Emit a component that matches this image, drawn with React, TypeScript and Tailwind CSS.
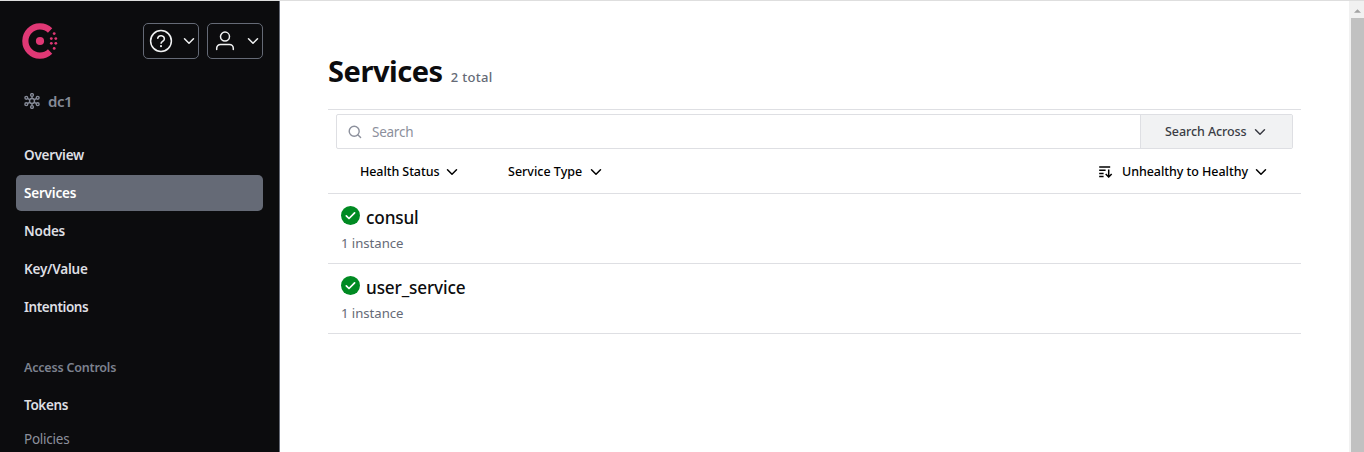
import type { ReactNode } from "react";

function Chevron({ className = "" }: { className?: string }) {
  return (
    <svg viewBox="0 0 12 12" className={"h-3 w-3 shrink-0 " + className} fill="none" stroke="currentColor" strokeWidth="1.5" strokeLinecap="round" strokeLinejoin="round">
      <path d="M1.5 3.8 6 8.3l4.5-4.5" />
    </svg>
  );
}

function ConsulLogo() {
  return (
    <svg viewBox="0 0 36 36" className="h-9 w-9" fill="#e03875">
      <path d="M28.1 28.5A14.6 14.6 0 1 1 28.1 7.5" fill="none" stroke="#e03875" strokeWidth="6.2" />
      <circle cx="18" cy="18" r="4.1" />
      <circle cx="32.2" cy="10.6" r="1.4" />
      <circle cx="29.3" cy="15.6" r="1.4" />
      <circle cx="33.8" cy="15.6" r="1.4" />
      <circle cx="29.3" cy="20.3" r="1.4" />
      <circle cx="33.8" cy="20.3" r="1.4" />
      <circle cx="32.2" cy="25.4" r="1.4" />
    </svg>
  );
}

function NetworkIcon() {
  return (
    <svg viewBox="0 0 16 16" className="h-4 w-4" fill="none" stroke="currentColor" strokeWidth="1.4">
      <circle cx="8" cy="8" r="2.5" />
      <circle cx="8" cy="2" r="1.4" />
      <circle cx="8" cy="14" r="1.4" />
      <circle cx="2.3" cy="4.8" r="1.4" />
      <circle cx="13.7" cy="4.8" r="1.4" />
      <circle cx="2.3" cy="11.2" r="1.4" />
      <circle cx="13.7" cy="11.2" r="1.4" />
      <path d="M8 3.3v2.4M8 10.3v2.4M3.4 5.4 6 6.8M12.6 5.4 10 6.8M3.4 10.6 6 9.2M12.6 10.6 10 9.2" />
    </svg>
  );
}

function HelpIcon() {
  return (
    <svg viewBox="0 0 24 24" className="h-6 w-6" fill="none" stroke="currentColor" strokeWidth="1.5" strokeLinecap="round" strokeLinejoin="round">
      <circle cx="12" cy="12" r="10.4" />
      <path d="M8.7 9.3a3.4 3.4 0 0 1 6.7.8c0 2.1-3.3 2.5-3.3 4.2" />
      <path d="M12 17.1v.1" strokeWidth="2" />
    </svg>
  );
}

function UserIcon() {
  return (
    <svg viewBox="0 0 24 24" className="h-6 w-6" fill="none" stroke="currentColor" strokeWidth="1.5" strokeLinecap="round">
      <circle cx="12" cy="7.6" r="4.5" />
      <path d="M3.7 20.6v-1.4c0-2.1 1.7-3.8 3.8-3.8h9c2.1 0 3.8 1.7 3.8 3.8v1.4" />
    </svg>
  );
}

function SearchIcon() {
  return (
    <svg viewBox="0 0 14 14" className="h-3.5 w-3.5" fill="none" stroke="currentColor" strokeWidth="1.4" strokeLinecap="round">
      <circle cx="6.2" cy="6.2" r="5" />
      <path d="m10 10 2.6 2.6" />
    </svg>
  );
}

function SortIcon() {
  return (
    <svg viewBox="0 0 14 12" className="h-3 w-3.5" fill="none" stroke="currentColor" strokeWidth="1.5">
      <path d="M.2 1h11M.2 4.2h6.4M.2 7.4h4.4M.2 10.6h4.4" />
      <path d="M9.7 3.4v7.4M6.7 8l3 3 3-3" />
    </svg>
  );
}

function CheckBadge() {
  return (
    <svg viewBox="0 0 19 19" className="h-[19px] w-[19px] shrink-0">
      <circle cx="9.5" cy="9.5" r="9.5" fill="#008a22" />
      <path d="m5.3 9.9 2.7 2.6 5.6-5.6" fill="none" stroke="#fff" strokeWidth="1.7" strokeLinecap="round" strokeLinejoin="round" />
    </svg>
  );
}

function HeaderButton({ label, children }: { label: string; children: ReactNode }) {
  return (
    <button aria-label={label} className="flex h-9 w-14 items-center justify-between rounded-[5px] border border-[#656a76] pr-[3px] pl-[5px] text-[#f1f2f3]">
      {children}
      <Chevron />
    </button>
  );
}

const mainLinks = [
  { label: "Overview", tracking: "tracking-[-0.22px]" },
  { label: "Services", tracking: "tracking-[-0.2px]", active: true },
  { label: "Nodes", tracking: "tracking-[-0.2px]" },
  { label: "Key/Value", tracking: "tracking-[-0.22px]" },
  { label: "Intentions", tracking: "tracking-[-0.42px]" },
];

const services = [
  { name: "consul", instances: "1 instance" },
  { name: "user_service", instances: "1 instance" },
];

function Sidebar() {
  return (
    <aside className="flex w-[280px] shrink-0 flex-col border-r border-[#656a76] bg-[#0c0c0e] pr-4 pl-4">
      <header className="flex items-center gap-2 pt-[22px] pl-1.5">
        <ConsulLogo />
        <div className="ml-auto flex gap-2">
          <HeaderButton label="Help"><HelpIcon /></HeaderButton>
          <HeaderButton label="Account"><UserIcon /></HeaderButton>
        </div>
      </header>
      <div className="mt-[31px] flex h-6 items-center gap-2 pl-2 text-[#858a97]">
        <NetworkIcon />
        <span className="text-[15px] font-semibold tracking-[-0.4px]">dc1</span>
      </div>
      <nav className="mt-6 flex flex-col gap-0.5 text-[13.5px] font-semibold text-[#dedfe3]">
        {mainLinks.map((link) => (
          <a key={link.label} className={"flex h-9 items-center rounded-[5px] pt-0.5 pl-2 " + link.tracking + (link.active ? " bg-[#656a76] text-white" : "")}>
            {link.label}
          </a>
        ))}
      </nav>
      <div className="mt-6 flex flex-col gap-0.5">
        <div className="flex h-9 items-center pt-1 pl-2 text-[12.5px] font-semibold tracking-[-0.2px] text-[#7d828f]">Access Controls</div>
        <a className="flex h-9 items-center pt-0.5 pl-2 text-[13.5px] font-semibold tracking-[-0.35px] text-[#dedfe3]">Tokens</a>
        <a className="-mt-1 flex h-9 items-center pt-0.5 pl-2 text-[13.5px] tracking-[-0.25px] text-[#8c909c]">Policies</a>
      </div>
    </aside>
  );
}

function Toolbar() {
  return (
    <section className="h-[85px] border-y border-[#dedfe3] px-2 pt-1">
      <div className="flex h-[35px] overflow-hidden rounded-[2px] border border-[#dedfe3]">
        <div className="flex flex-1 items-center gap-2.5 pl-[11px] text-[#8c909c]">
          <SearchIcon />
          <span className="pt-0.5 text-[13.5px] tracking-[-0.25px]">Search</span>
        </div>
        <button className="flex w-[152px] items-center gap-[7px] border-l border-[#dedfe3] bg-[#f1f2f3] pl-6 text-[12.5px] font-medium text-[#3b3d45]">
          <span className="pt-0.5 tracking-[-0.08px]">Search Across</span>
          <Chevron />
        </button>
      </div>
      <div className="flex h-[45px] items-center pr-[26px] pl-6 text-[12.5px] font-medium text-black">
        <button className="flex w-[148px] items-center gap-[7px]"><span className="pt-0.5 tracking-[-0.08px]">Health Status</span><Chevron /></button>
        <button className="flex items-center gap-2"><span className="pt-0.5">Service Type</span><Chevron /></button>
        <button className="ml-auto flex items-center">
          <SortIcon />
          <span className="mr-[7px] ml-[9px] pt-0.5 tracking-[-0.05px]">Unhealthy to Healthy</span>
          <Chevron />
        </button>
      </div>
    </section>
  );
}

export default function App() {
  return (
    <div className="flex h-[452px] w-full overflow-hidden border-t border-[#dedede] bg-white font-['Noto_Sans',sans-serif]">
      <Sidebar />
      <main className="flex-1 pr-12 pl-12">
        <header className="flex h-[108px] items-baseline gap-2 pt-[50px] leading-[40px]">
          <h1 className="text-[29px] font-bold tracking-[-0.45px] text-[#0c0c0e]">Services</h1>
          <span className="text-[13px] font-medium tracking-[0.3px] text-[#656a76]">2 total</span>
        </header>
        <Toolbar />
        <ul>
          {services.map((service) => (
            <li key={service.name} className="h-[70px] border-b border-[#dedfe3] pt-3 pl-[13px]">
              <div className="flex h-[22px]">
                <CheckBadge />
                <h2 className="ml-1.5 text-[17.2px] leading-[23px] font-medium tracking-[-0.15px] text-[#0c0c0e]">{service.name}</h2>
              </div>
              <p className="mt-[5px] text-[13.2px] leading-5 tracking-[-0.05px] text-[#656a76]">{service.instances}</p>
            </li>
          ))}
        </ul>
      </main>
      <div className="flex w-[15px] shrink-0 flex-col items-end bg-[#f1f1f1]">
        <div className="flex h-[17px] w-[15px] items-center justify-center pt-0.5 pl-0.5">
          <svg viewBox="0 0 8 4" className="h-1 w-[7px]" fill="#a3a3a3"><path d="M4 0 8 4H0Z" /></svg>
        </div>
        <div className="w-[13px] flex-1 bg-[#c1c1c1]" />
      </div>
    </div>
  );
}
